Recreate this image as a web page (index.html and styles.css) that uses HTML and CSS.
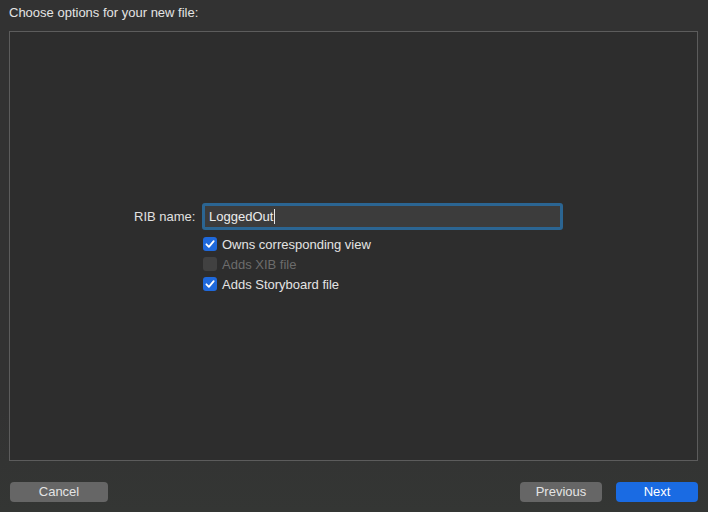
FILE: index.html
```html
<!DOCTYPE html>
<html>
<head>
<meta charset="utf-8">
<link rel="stylesheet" href="styles.css">
</head>
<body>
<div class="window">
  <div class="title">Choose options for your new file:</div>
  <div class="panel">
    <div class="form">
      <div class="row">
        <label class="label">RIB name:</label>
        <div class="field"><span class="value">LoggedOut</span><span class="caret"></span></div>
      </div>
      <div class="checks">
        <div class="check">
          <span class="box on"><svg viewBox="0 0 14 14" width="14" height="14"><path d="M3.4 7.3 L5.9 9.9 L10.7 4.1" fill="none" stroke="#fff" stroke-width="1.8" stroke-linecap="round" stroke-linejoin="round"/></svg></span>
          <span class="text">Owns corresponding view</span>
        </div>
        <div class="check disabled">
          <span class="box off"></span>
          <span class="text">Adds XIB file</span>
        </div>
        <div class="check">
          <span class="box on"><svg viewBox="0 0 14 14" width="14" height="14"><path d="M3.4 7.3 L5.9 9.9 L10.7 4.1" fill="none" stroke="#fff" stroke-width="1.8" stroke-linecap="round" stroke-linejoin="round"/></svg></span>
          <span class="text">Adds Storyboard file</span>
        </div>
      </div>
    </div>
  </div>
  <div class="footer">
    <button class="btn cancel">Cancel</button>
    <div class="spacer"></div>
    <button class="btn prev">Previous</button>
    <button class="btn next">Next</button>
  </div>
</div>
</body>
</html>
```
FILE: styles.css
```css
html, body {
  margin: 0;
  padding: 0;
}
body {
  width: 708px;
  height: 512px;
  background: #323232;
  font-family: "Liberation Sans", Arial, sans-serif;
  font-size: 13px;
  color: #dedede;
  overflow: hidden;
}
.window {
  display: flex;
  flex-direction: column;
  height: 512px;
  background: linear-gradient(180deg, #323232 0%, #323232 80%, #343634 100%);
}
.title {
  padding: 5px 9px 0 9px;
  height: 26px;
  line-height: 16px;
  color: #e4e4e4;
}
.panel {
  margin: 0 10px 0 9px;
  height: 428px;
  border: 1px solid #5c5c5c;
  background: #2d2d2d;
  display: flex;
  align-items: center;
  justify-content: flex-start;
  padding-left: 124px;
  box-sizing: content-box;
}
.form {
  display: flex;
  flex-direction: column;
  margin-top: 2px;
}
.row {
  display: flex;
  align-items: center;
  gap: 8px;
}
.label {
  width: 60px;
  flex-shrink: 0;
  white-space: nowrap;
  text-align: right;
  color: #e0e0e0;
}
.field {
  width: 351px;
  height: 21px;
  flex-shrink: 0;
  border: 3px solid #2b6592;
  border-radius: 3px;
  background: #3c3c3c;
  display: flex;
  align-items: center;
  padding-left: 4px;
  color: #ececec;
}
.caret {
  width: 1px;
  height: 15px;
  background: #e6e6e6;
  margin-left: 1px;
}
.checks {
  display: flex;
  flex-direction: column;
  gap: 6px;
  margin-top: 7px;
  margin-left: 69px;
}
.check {
  display: flex;
  align-items: center;
  gap: 5px;
  height: 14px;
}
.box {
  width: 14px;
  height: 14px;
  border-radius: 3px;
  display: block;
  flex-shrink: 0;
}
.box svg {
  display: block;
}
.box.on {
  background: #1f69dc;
}
.box.off {
  background: #414141;
}
.check .text {
  color: #e4e4e4;
}
.check.disabled .text {
  color: #6c6c6c;
}
.footer {
  display: flex;
  align-items: center;
  padding: 21px 10px 0 10px;
  gap: 14px;
}
.spacer {
  flex: 1;
}
.btn {
  font-family: "Liberation Sans", Arial, sans-serif;
  font-size: 13px;
  height: 20px;
  border: none;
  border-radius: 4px;
  color: #e4e4e4;
  background: #666666;
  padding: 0;
  line-height: 20px;
}
.cancel {
  width: 98px;
}
.prev {
  width: 82px;
}
.next {
  width: 82px;
  background: #1a6be3;
  color: #ffffff;
}
```
